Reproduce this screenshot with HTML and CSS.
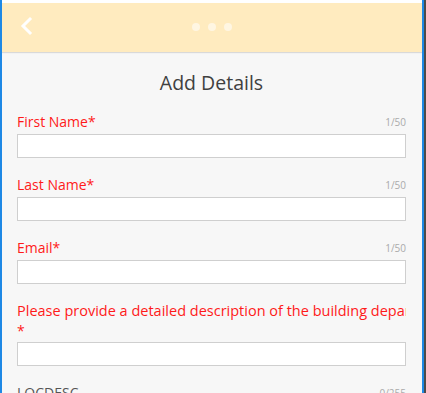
FILE: index.html
```html
<!DOCTYPE html>
<html>
<head>
<meta charset="utf-8">
<link rel="stylesheet" href="styles.css">
</head>
<body>
<div class="app">
  <header class="topbar">
    <div class="back">
      <svg width="14" height="20" viewBox="0 0 14 20"><polyline points="10,3 3,10 10,17" fill="none" stroke="#fff" stroke-width="3" stroke-linecap="square"/></svg>
    </div>
    <div class="dots"><span></span><span></span><span></span></div>
    <div></div>
  </header>
  <main class="content">
    <h1 class="title">Add Details</h1>
    <div class="field">
      <div class="label-row"><span class="label">First Name*</span><span class="count">1/50</span></div>
      <div class="input"></div>
    </div>
    <div class="field">
      <div class="label-row"><span class="label">Last Name*</span><span class="count">1/50</span></div>
      <div class="input"></div>
    </div>
    <div class="field">
      <div class="label-row"><span class="label">Email*</span><span class="count">1/50</span></div>
      <div class="input"></div>
    </div>
    <div class="field">
      <div class="long-label">Please provide a detailed description of the building department's request</div>
      <div class="star">*</div>
      <div class="input"></div>
    </div>
    <div class="field">
      <div class="label-row"><span class="label plain">LOCDESC</span><span class="count">0/255</span></div>
      <div class="input"></div>
    </div>
  </main>
</div>
</body>
</html>
```
FILE: styles.css
```css
html, body { margin: 0; padding: 0; }
body {
  background: #4b4b4b;
  font-family: "Open Sans", "Noto Sans", sans-serif;
  width: 426px;
  height: 393px;
  overflow: hidden;
}
.app {
  width: 420px;
  height: 393px;
  border-left: 2px solid #1e88e5;
  border-right: 2px solid #1e88e5;
  padding-top: 3px;
  background-image: linear-gradient(#ffffff, #ffffff);
  background-size: 100% 3px;
  background-repeat: no-repeat;
  background-color: #f7f7f7;
  overflow: hidden;
}
.topbar {
  height: 49px;
  background: #ffebbf;
  display: grid;
  grid-template-columns: 1fr auto 1fr;
  align-items: center;
  box-shadow: 0 1px 1px rgba(0,0,0,0.12);
  position: relative;
}
.back {
  padding-left: 18px;
  display: flex;
  align-items: center;
  height: 20px;
  margin-top: -4px;
}
.dots {
  display: flex;
  gap: 8px;
  margin-top: -1px;
}
.dots span {
  width: 8px;
  height: 8px;
  border-radius: 50%;
  background: rgba(255,255,255,0.55);
}
.content {
  padding: 0 16px 0 15px;
}
.title {
  margin: 19px 0 17px;
  font-size: 19.5px;
  line-height: 24px;
  font-weight: 400;
  color: #404040;
  text-align: center;
}
.field {
  margin-bottom: 17px;
}
.label-row {
  display: flex;
  justify-content: space-between;
  align-items: baseline;
  height: 20px;
  margin-bottom: 2px;
}
.label {
  font-size: 14px;
  line-height: 20px;
  color: #ff1a1a;
}
.label.plain { color: #555; }
.count {
  font-size: 10px;
  line-height: 14px;
  color: #aaa;
  position: relative;
  top: -1px;
}
.long-label {
  font-size: 14.5px;
  line-height: 20px;
  color: #ff1a1a;
  white-space: nowrap;
  overflow: hidden;
}
.star {
  font-size: 14px;
  line-height: 20px;
  color: #ff1a1a;
  margin-bottom: 1px;
}
.input {
  height: 22px;
  background: #fff;
  border: 1px solid #cfcfcf;
}
```
